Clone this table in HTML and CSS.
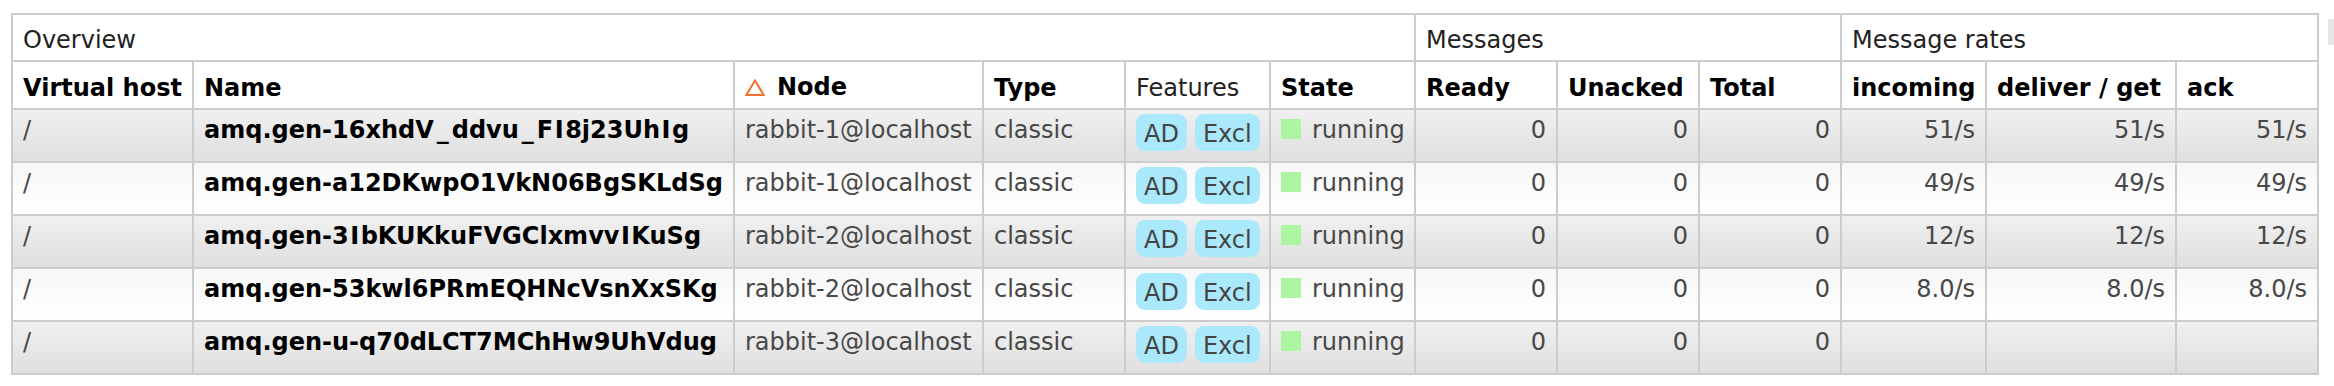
FILE: index.html
```html
<!DOCTYPE html>
<html lang="en">
<head>
<meta charset="utf-8">
<title>Queues</title>
<link rel="stylesheet" href="styles.css">
</head>
<body>
<div class="page">
  <table class="list">
    <colgroup>
      <col class="w-vhost"><col class="w-name"><col class="w-node"><col class="w-type"><col class="w-feat"><col class="w-state">
      <col class="w-ready"><col class="w-unacked"><col class="w-total">
      <col class="w-in"><col class="w-deliver"><col class="w-ack">
    </colgroup>
    <thead>
      <tr class="group">
        <th colspan="6">Overview</th>
        <th colspan="3">Messages</th>
        <th colspan="3">Message rates</th>
      </tr>
      <tr class="cols">
        <th>Virtual host</th>
        <th>Name</th>
        <th><span class="sort"><svg class="tri" width="20" height="17" viewBox="0 0 20 17"><polygon points="10,1.6 18.6,15.9 1.4,15.9" fill="none" stroke="#f07030" stroke-width="2"/></svg>Node</span></th>
        <th>Type</th>
        <th class="plain">Features</th>
        <th>State</th>
        <th>Ready</th>
        <th>Unacked</th>
        <th>Total</th>
        <th>incoming</th>
        <th>deliver / get</th>
        <th>ack</th>
      </tr>
    </thead>
    <tbody>
      <tr class="alt1">
        <td>/</td>
        <td class="name">amq.gen-16xhdV<span class="us">_</span>ddvu<span class="us">_</span>F<span class="ci">I</span>8j23Uh<span class="ci">I</span>g</td>
        <td>rabbit-1@localhost</td>
        <td>classic</td>
        <td><span class="tag">AD</span><span class="tag">Excl</span></td>
        <td><span class="dot"></span>running</td>
        <td class="r">0</td><td class="r">0</td><td class="r">0</td>
        <td class="r">51/s</td><td class="r">51/s</td><td class="r">51/s</td>
      </tr>
      <tr class="alt2">
        <td>/</td>
        <td class="name">amq.gen-a12DKwpO1VkN06BgSKLdSg</td>
        <td>rabbit-1@localhost</td>
        <td>classic</td>
        <td><span class="tag">AD</span><span class="tag">Excl</span></td>
        <td><span class="dot"></span>running</td>
        <td class="r">0</td><td class="r">0</td><td class="r">0</td>
        <td class="r">49/s</td><td class="r">49/s</td><td class="r">49/s</td>
      </tr>
      <tr class="alt1">
        <td>/</td>
        <td class="name">amq.gen-3<span class="ci">I</span>bKUKkuFVGClxmvv<span class="ci">I</span>KuSg</td>
        <td>rabbit-2@localhost</td>
        <td>classic</td>
        <td><span class="tag">AD</span><span class="tag">Excl</span></td>
        <td><span class="dot"></span>running</td>
        <td class="r">0</td><td class="r">0</td><td class="r">0</td>
        <td class="r">12/s</td><td class="r">12/s</td><td class="r">12/s</td>
      </tr>
      <tr class="alt2">
        <td>/</td>
        <td class="name">amq.gen-53kwl6PRmEQHNcVsnXxSKg</td>
        <td>rabbit-2@localhost</td>
        <td>classic</td>
        <td><span class="tag">AD</span><span class="tag">Excl</span></td>
        <td><span class="dot"></span>running</td>
        <td class="r">0</td><td class="r">0</td><td class="r">0</td>
        <td class="r">8.0/s</td><td class="r">8.0/s</td><td class="r">8.0/s</td>
      </tr>
      <tr class="alt1">
        <td>/</td>
        <td class="name">amq.gen-u-q70dLCT7MChHw9UhVdug</td>
        <td>rabbit-3@localhost</td>
        <td>classic</td>
        <td><span class="tag">AD</span><span class="tag">Excl</span></td>
        <td><span class="dot"></span>running</td>
        <td class="r">0</td><td class="r">0</td><td class="r">0</td>
        <td class="r"></td><td class="r"></td><td class="r"></td>
      </tr>
    </tbody>
  </table>
  <div class="colchooser"></div>
</div>
</body>
</html>
```

FILE: styles.css
```css
html, body {
  margin: 0;
  padding: 0;
  background: #fff;
  overflow: hidden;
}

body {
  font-family: "DejaVu Sans", Verdana, sans-serif;
  font-size: 24px;
  color: #484848;
}

.page {
  display: flex;
  align-items: flex-start;
  padding: 13px 0 0 11px;
}

table.list {
  border-collapse: collapse;
  table-layout: fixed;
  width: 2308px;
  flex: none;
  border: 2px solid #ccc;
}

.w-vhost { width: 181px; }
.w-name { width: 541px; }
.w-node { width: 249px; }
.w-type { width: 142px; }
.w-feat { width: 145px; }
.w-state { width: 145px; }
.w-ready { width: 142px; }
.w-unacked { width: 142px; }
.w-total { width: 142px; }
.w-in { width: 145px; }
.w-deliver { width: 190px; }
.w-ack { width: 142px; }

table.list th,
table.list td {
  border: 2px solid #ccc;
  text-align: left;
  white-space: nowrap;
  overflow: hidden;
}

table.list th {
  padding: 11px 10px 5px;
  line-height: 29px;
  font-weight: bold;
  color: #000;
  background: #fff;
  vertical-align: middle;
}

table.list tr.group th {
  font-weight: normal;
  color: #222;
}

table.list th.plain {
  font-weight: normal;
  color: #222;
}

.sort {
  display: inline-flex;
  align-items: center;
  gap: 12px;
}

.tri {
  display: block;
  flex: none;
}

table.list td {
  padding: 4px 10px 10px;
  line-height: 32px;
  vertical-align: top;
}

table.list td.r {
  text-align: right;
}

table.list td.name {
  font-weight: bold;
  color: #000;
}

.us {
  padding: 0 3px;
}

.ci {
  padding: 0 1.5px;
}

tr.alt1 td {
  background: linear-gradient(#f0f0f0, #dfdfdf);
}

tr.alt2 td {
  background: linear-gradient(#f7f7f7, #ffffff);
}

.tag {
  display: inline-block;
  background: #aae9fb;
  color: #444;
  padding: 6px 8px 3px;
  border-radius: 9px;
  line-height: 28px;
  margin-right: 8px;
}

.tag:last-child {
  margin-right: 0;
}

.dot {
  display: inline-block;
  width: 20px;
  height: 20px;
  background: #adf5a2;
  margin-right: 11px;
  vertical-align: -1px;
}

.colchooser {
  flex: none;
  width: 40px;
  height: 26px;
  margin: 6px 0 0 9px;
  background: #e6e6e6;
}
```
